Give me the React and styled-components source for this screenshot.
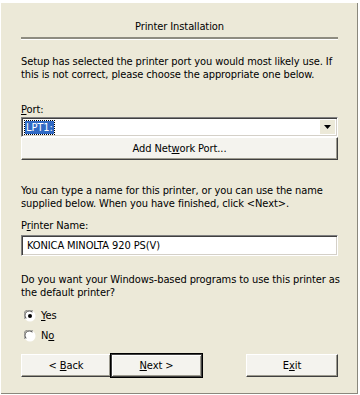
import React from "react";
import styled, { createGlobalStyle } from "styled-components";

const Global = createGlobalStyle`
  html, body { margin: 0; padding: 0; background: #ffffff; }
  body { font-family: "DejaVu Sans Condensed", "DejaVu Sans", sans-serif; font-size: 11px; color: #000; letter-spacing: -0.1px; }
`;

const Dialog = styled.div`
  box-sizing: border-box;
  margin: 3px 0 0 1px;
  width: 357px;
  height: 391px;
  background: #ece9d8;
  border-right: 1px solid #8a887c;
  border-bottom: 1px solid #8a887c;
  padding: 17px 19px 0 20px;
  display: flex;
  flex-direction: column;
`;

const Title = styled.div`
  text-align: center;
  line-height: 14px;
`;

const Separator = styled.div`
  margin-top: 3px;
  height: 2px;
  background: #8e8c80;
  border-bottom: 1px solid #ffffff;
`;

const Para = styled.div`
  margin-top: ${(p) => p.$mt}px;
  line-height: 13px;
  white-space: nowrap;
`;

const Label = styled.div`
  margin-top: ${(p) => p.$mt}px;
  line-height: 14px;
`;

const Key = styled.span`
  text-decoration: underline;
`;

const Combo = styled.div`
  height: 20px;
  box-sizing: border-box;
  background: #fff;
  border-top: 1px solid #808080;
  border-left: 1px solid #808080;
  border-right: 1px solid #ffffff;
  border-bottom: 1px solid #ffffff;
  box-shadow: inset 1px 1px 0 #404040, inset -1px -1px 0 #d4d0c8;
  display: flex;
  align-items: center;
  padding: 0 2px 0 3px;
`;

const Selected = styled.span`
  background: #316ac5;
  color: #fff;
  padding: 0 1px;
  line-height: 13px;
  outline: 1px dotted #000;
`;

const Spacer = styled.div`
  flex: 1;
`;

const DropBtn = styled.div`
  width: 15px;
  height: 14px;
  display: flex;
  align-items: center;
  justify-content: center;
  background: #ece9d8;
`;

const Button = styled.div`
  box-sizing: border-box;
  height: 23px;
  width: ${(p) => (p.$w ? p.$w + "px" : "auto")};
  background: #f4f3ee;
  border-top: 1px solid #ffffff;
  border-left: 1px solid #ffffff;
  border-right: 1px solid #404040;
  border-bottom: 1px solid #404040;
  box-shadow: inset -1px -1px 0 #9d9b8f;
  display: flex;
  align-items: center;
  justify-content: center;
  white-space: pre;
  ${(p) =>
    p.$default &&
    `
    outline: 1px solid #000;
    outline-offset: 0px;
    border: 1px solid #404040;
    box-shadow: inset 1px 1px 0 #ffffff, inset -1px -1px 0 #9d9b8f;
  `}
`;

const Input = styled.div`
  margin-top: 2px;
  height: 21px;
  box-sizing: border-box;
  background: #fff;
  border-top: 1px solid #808080;
  border-left: 1px solid #808080;
  border-right: 1px solid #ffffff;
  border-bottom: 1px solid #ffffff;
  box-shadow: inset 1px 1px 0 #404040, inset -1px -1px 0 #d4d0c8;
  display: flex;
  align-items: center;
  padding-left: 5px;
`;

const RadioRow = styled.div`
  margin-top: ${(p) => p.$mt}px;
  display: flex;
  align-items: center;
  gap: 5px;
  padding-left: 3px;
  line-height: 14px;
`;

const ButtonRow = styled.div`
  margin-top: 11px;
  display: flex;
  align-items: center;
`;

const Radio = ({ checked }) => (
  <svg width="12" height="12" viewBox="0 0 12 12">
    <circle cx="6" cy="6" r="5.5" fill="#ffffff" />
    <path d="M1.2 9 A5.3 5.3 0 0 1 9 1.2" stroke="#808080" strokeWidth="1" fill="none" />
    <path d="M2.2 8.3 A4.3 4.3 0 0 1 8.3 2.2" stroke="#404040" strokeWidth="1" fill="none" />
    {checked && <circle cx="6" cy="6" r="2" fill="#000" />}
  </svg>
);

export default function App() {
  return (
    <>
      <Global />
      <Dialog>
        <Title>Printer Installation</Title>
        <Separator />
        <Para $mt={15}>
          Setup has selected the printer port you would most likely use. If
          <br />
          this is not correct, please choose the appropriate one below.
        </Para>
        <Label $mt={22}>
          <Key>P</Key>ort:
        </Label>
        <Combo>
          <Selected>LPT1:</Selected>
          <Spacer />
          <DropBtn>
            <svg width="7" height="4" viewBox="0 0 7 4">
              <path d="M0 0 H7 L3.5 4 Z" fill="#000" />
            </svg>
          </DropBtn>
        </Combo>
        <Button>
          Add Net<Key>w</Key>ork Port...
        </Button>
        <Para $mt={24}>
          You can type a name for this printer, or you can use the name
          <br />
          supplied below. When you have finished, click &lt;Next&gt;.
        </Para>
        <Label $mt={9}>
          P<Key>r</Key>inter Name:
        </Label>
        <Input>KONICA MINOLTA 920 PS(V)</Input>
        <Para $mt={17}>
          Do you want your Windows-based programs to use this printer as
          <br />
          the default printer?
        </Para>
        <RadioRow $mt={10}>
          <Radio checked />
          <span>
            <Key>Y</Key>es
          </span>
        </RadioRow>
        <RadioRow $mt={6}>
          <Radio />
          <span>
            N<Key>o</Key>
          </span>
        </RadioRow>
        <ButtonRow>
          <Button $w={90}>
            {"< "}
            <Key>B</Key>ack
          </Button>
          <Button $w={91} $default>
            <Key>N</Key>ext {">"}
          </Button>
          <Spacer />
          <Button $w={92}>
            E<Key>x</Key>it
          </Button>
        </ButtonRow>
      </Dialog>
    </>
  );
}
